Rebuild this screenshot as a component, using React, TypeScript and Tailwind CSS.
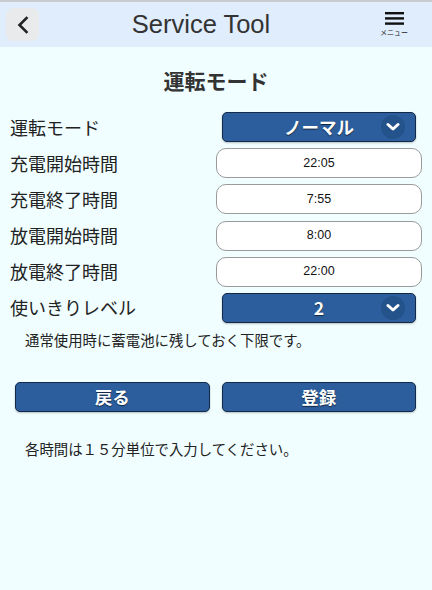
import React from "react";

const jp = "font-['Noto_Sans_CJK_JP','Liberation_Sans',sans-serif]";

function ChevronCircle() {
  return (
    <span className="absolute right-[10px] top-1/2 flex h-[24px] w-[24px] -translate-y-1/2 items-center justify-center rounded-full bg-[#24528a]">
      <svg width="14" height="10" viewBox="0 0 14 10">
        <path d="M2 2.5 L7 7 L12 2.5" fill="none" stroke="#fff" strokeWidth="3" strokeLinecap="round" strokeLinejoin="round" />
      </svg>
    </span>
  );
}

function SelectBox({ value }: { value: string }) {
  return (
    <div className="relative mx-[6px] flex h-[30px] items-center justify-center rounded-[5px] border border-[#13294a] bg-[#2c5e9d] shadow-[0_1px_2px_rgba(0,0,0,0.25)]">
      <span className="text-[17.5px] font-bold text-white [text-shadow:0_1px_1px_rgba(0,0,0,0.6)]">{value}</span>
      <ChevronCircle />
    </div>
  );
}

function TimeInput({ value }: { value: string }) {
  return (
    <div className="flex h-[30px] items-center justify-center rounded-[10px] border border-[#9a9a9a] bg-white text-[12.5px] text-[#111] font-['Liberation_Sans',sans-serif]">
      {value}
    </div>
  );
}

const rows: { label: string; kind: "select" | "input"; value: string }[] = [
  { label: "運転モード", kind: "select", value: "ノーマル" },
  { label: "充電開始時間", kind: "input", value: "22:05" },
  { label: "充電終了時間", kind: "input", value: "7:55" },
  { label: "放電開始時間", kind: "input", value: "8:00" },
  { label: "放電終了時間", kind: "input", value: "22:00" },
  { label: "使いきりレベル", kind: "select", value: "2" },
];

export default function App() {
  return (
    <div className={`min-h-[590px] w-full bg-[#f0feff] text-[#222] ${jp}`}>
      {/* ヘッダー */}
      <header className="flex h-[47px] items-center border-t-2 border-[#c9cdd2] bg-[#dfedfc] pl-[6px] pr-[28px]">
        <button className="flex h-[33px] w-[33px] shrink-0 items-center justify-center rounded-[7px] bg-[#e9eaec]">
          <svg width="14" height="18" viewBox="0 0 14 18">
            <path d="M10.5 2 L3.5 9 L10.5 16" fill="none" stroke="#222" strokeWidth="2.6" strokeLinecap="square" />
          </svg>
        </button>
        <h1 className="flex-1 pr-[21px] text-center text-[25.5px] text-[#333] font-['Liberation_Sans',sans-serif]">Service Tool</h1>
        <div className="flex w-[20px] flex-col items-center">
          <svg width="19" height="14" viewBox="0 0 19 14">
            <rect x="0" y="0" width="19" height="2.4" fill="#111" />
            <rect x="0" y="5.2" width="19" height="2.4" fill="#111" />
            <rect x="0" y="10.4" width="19" height="2.4" fill="#111" />
          </svg>
          <span className="mt-[2px] whitespace-nowrap text-[7px] leading-[9px] text-[#222]">メニュー</span>
        </div>
      </header>

      <h2 className="mt-[19px] text-center text-[21px] font-bold leading-[28px] text-[#333]">運転モード</h2>

      <div className="mt-[18px] flex flex-col gap-[6.2px] px-[10px]">
        {rows.map((r) => (
          <div key={r.label} className="flex h-[30px] items-center justify-between">
            <span className="text-[18px] text-[#222]">{r.label}</span>
            <div className="w-[206px]">
              {r.kind === "select" ? <SelectBox value={r.value} /> : <TimeInput value={r.value} />}
            </div>
          </div>
        ))}
      </div>

      <p className="mt-[8px] pl-[25px] text-[14.4px] leading-[18px] text-[#222]">通常使用時に蓄電池に残しておく下限です。</p>

      <div className="mt-[33px] flex gap-[12px] pl-[15px] pr-[16px]">
        {["戻る", "登録"].map((t) => (
          <button
            key={t}
            className="flex h-[30px] flex-1 items-center justify-center rounded-[5px] border border-[#13294a] bg-[#2c5e9d] text-[17.5px] font-bold text-white shadow-[0_1px_2px_rgba(0,0,0,0.25)] [text-shadow:0_1px_1px_rgba(0,0,0,0.6)]"
          >
            {t}
          </button>
        ))}
      </div>

      <p className="mt-[28px] pl-[25px] text-[14.4px] leading-[18px] text-[#222]">各時間は１５分単位で入力してください。</p>
    </div>
  );
}
